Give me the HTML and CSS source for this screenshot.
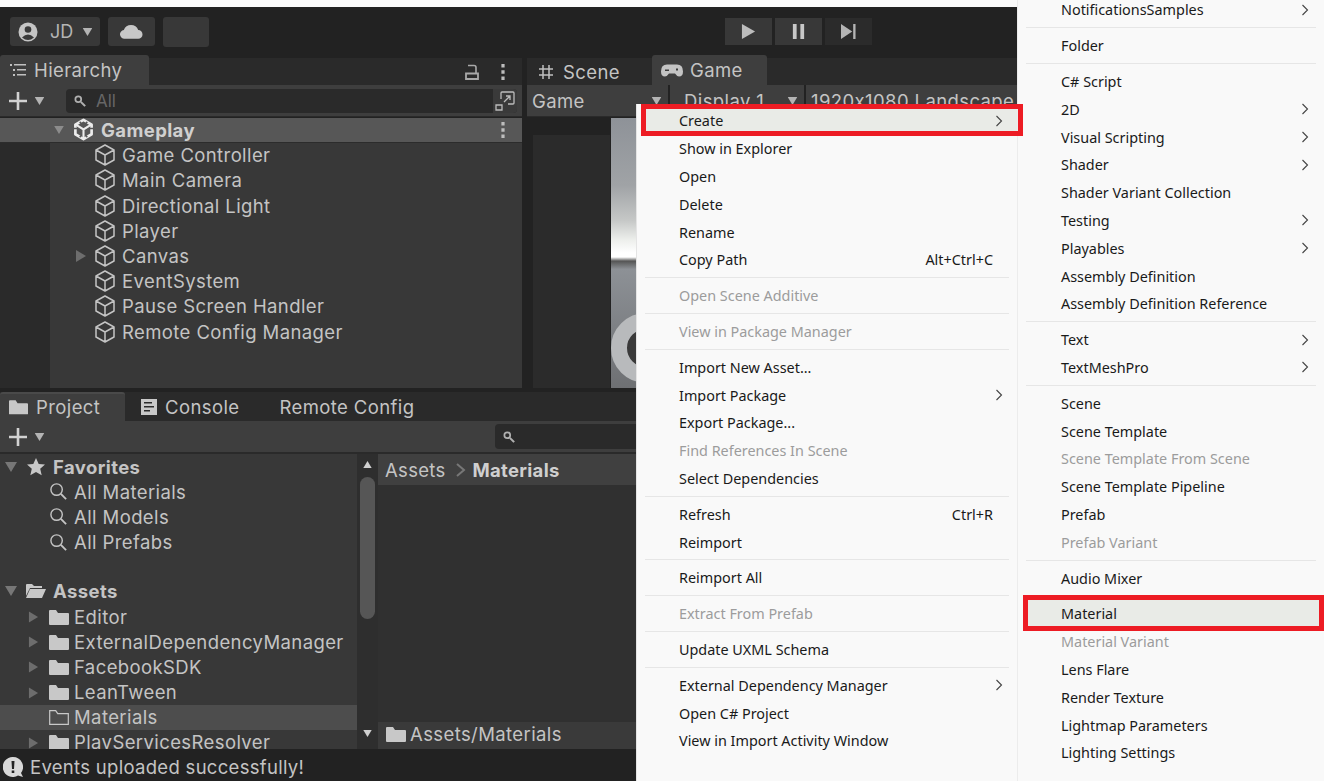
FILE: index.html
```html
<!DOCTYPE html>
<html lang="en">
<head>
  <meta charset="UTF-8">
  <title>Unity Editor - Create Material</title>
  <link rel="stylesheet" href="styles.css">
</head>
<body>
  <svg class="sprite" aria-hidden="true">
    <symbol id="cube" viewBox="0 0 22 24"><path d="M11 2 20 7v10l-9 5-9-5V7zM2 7l9 5 9-5M11 12v10" fill="none" stroke="#c4c4c4" stroke-width="1.5" stroke-linejoin="round"/></symbol>
    <symbol id="folder" viewBox="0 0 20 16"><path d="M0 2q0-1 1-1h6l2 3h10q1 0 1 1v10q0 1-1 1H1q-1 0-1-1z" fill="#c8c8c8"/></symbol>
    <symbol id="lens" viewBox="0 0 20 20"><circle cx="8" cy="8" r="6" fill="none" stroke="#c4c4c4" stroke-width="1.5"/><path d="M12.5 12.5 18 18" stroke="#c4c4c4" stroke-width="2"/></symbol>
    <symbol id="right" viewBox="0 0 12 12"><path d="M1 0 11 6 1 12z" fill="#6d6d6d"/></symbol>
    <symbol id="down" viewBox="0 0 12 10"><path d="M0 0h12L6 10z" fill="#b4b4b4"/></symbol>
    <symbol id="chev" viewBox="0 0 8 12"><path d="M1.5 1 6.5 6l-5 5" fill="none" stroke="#444" stroke-width="1.1"/></symbol>
    <symbol id="plus" viewBox="0 0 20 20"><path d="M10 1v18M1 10h18" stroke="#d2d2d2" stroke-width="2.6"/></symbol>
    <symbol id="dots" viewBox="0 0 4 18"><path d="M0 0h4v4H0zM0 7h4v4H0zM0 14h4v4H0z" fill="#bdbdbd"/></symbol>
    <symbol id="tiny-search" viewBox="0 0 14 14"><circle cx="5" cy="5" r="3.4" fill="none" stroke="#b0b0b0" stroke-width="2"/><path d="M8 8l5 5" stroke="#b0b0b0" stroke-width="2.4"/></symbol>
  </svg>

  <div class="page">
    <div class="editor">
      <header class="toolbar">
        <div class="tool-left">
          <div class="btn btn-account">
            <svg class="ic-20" viewBox="0 0 20 20"><circle cx="10" cy="10" r="9.5" fill="#c4c4c4"/><circle cx="10" cy="7.5" r="3.3" fill="#383838"/><path d="M4 15.5q6-6 12 0-6 5-12 0z" fill="#383838"/></svg>
            <span class="btn-text">JD</span>
            <svg class="ic-down" viewBox="0 0 12 10"><use href="#down"/></svg>
          </div>
          <div class="btn btn-cloud">
            <svg class="ic-cloud" viewBox="0 0 24 15"><path d="M5 15a4.500 4.500 0 0 1-1-9 8 8 0 0 1 15 0 4.500 4.500 0 0 1 0 9z" fill="#c8c8c8"/></svg>
          </div>
          <div class="btn btn-blank"></div>
        </div>
        <div class="tool-play">
          <div class="play-btn"><svg class="ic-play" viewBox="0 0 14 16"><path d="M0 0 14 8 0 16z" fill="#bcbcbc"/></svg></div>
          <div class="play-btn"><svg class="ic-play" viewBox="0 0 14 16"><path d="M1 0h4v16H1zM9 0h4v16H9z" fill="#c8c8c8"/></svg></div>
          <div class="play-btn play-off"><svg class="ic-play" viewBox="0 0 16 16"><path d="M0 0 12 8 0 16zM13 0h2.500v16H13z" fill="#b4b4b4"/></svg></div>
        </div>
      </header>

      <div class="top-row">
        <section class="hierarchy">
          <div class="tabbar">
            <div class="tab tab-active tab-hier">
              <svg class="ic-tab" viewBox="0 0 16 14"><path d="M0 1h2v2H0zM3 6h2v2H3zM3 11h2v2H3zM4 1h12v1.500H4zM7 6h9v1.500H7zM7 11h9v1.500H7z" fill="#c0c0c0"/></svg>
              Hierarchy
            </div>
            <div class="tab-tools">
              <svg class="ic-lock" viewBox="0 0 14 16"><path d="M3 1.500h6q2 0 2 2V9" fill="none" stroke="#a8a8a8" stroke-width="1.600"/><path d="M1 9.500h12v5.500H1z" fill="none" stroke="#a8a8a8" stroke-width="1.800"/></svg>
              <svg class="ic-dots" viewBox="0 0 4 18"><use href="#dots"/></svg>
            </div>
          </div>
          <div class="panel-bar hier-bar">
            <svg class="ic-plus" viewBox="0 0 20 20"><use href="#plus"/></svg>
            <svg class="ic-down-sm" viewBox="0 0 12 10"><use href="#down"/></svg>
            <div class="search search-hier">
              <svg class="ic-search-sm" viewBox="0 0 14 14"><use href="#tiny-search"/></svg>
              <span class="search-hint">All</span>
              <div class="search-end">
                <svg class="ic-popout" viewBox="0 0 20 20"><path d="M6 8V2q0-1 1-1h11q1 0 1 1v10q0 1-1 1h-5M1 14h6v5H1zM9 11l6-6M11 5h4v4" fill="none" stroke="#bcbcbc" stroke-width="1.300"/></svg>
              </div>
            </div>
          </div>
          <div class="scene-row">
            <svg class="ic-arrow-scene" viewBox="0 0 12 10"><path d="M0 0h12L6 10z" fill="#8c8c8c"/></svg>
            <svg class="ic-unity" viewBox="0 0 22 24"><path d="M11 2 19.500 7v10L11 22l-8.500-5V7z" fill="none" stroke="#ececec" stroke-width="2.800" stroke-linejoin="round"/><path d="M3 7l8 5 8-5M11 12v9" fill="none" stroke="#ececec" stroke-width="2.200"/><path d="M0 11h5M17 11h5M7 20l2-2M15 20l-2-2M7 4l2 2M15 4l-2 2" stroke="#575757" stroke-width="1.600"/></svg>
            <span class="scene-name">Gameplay</span>
            <svg class="ic-dots scene-dots" viewBox="0 0 4 18"><use href="#dots"/></svg>
          </div>
          <div class="hier-body">
            <ul class="tree hier-tree">
              <li class="tree-row"><svg class="ic-cube"><use href="#cube"/></svg>Game Controller</li>
              <li class="tree-row"><svg class="ic-cube"><use href="#cube"/></svg>Main Camera</li>
              <li class="tree-row"><svg class="ic-cube"><use href="#cube"/></svg>Directional Light</li>
              <li class="tree-row"><svg class="ic-cube"><use href="#cube"/></svg>Player</li>
              <li class="tree-row has-arrow"><svg class="ic-right"><use href="#right"/></svg><svg class="ic-cube"><use href="#cube"/></svg>Canvas</li>
              <li class="tree-row"><svg class="ic-cube"><use href="#cube"/></svg>EventSystem</li>
              <li class="tree-row"><svg class="ic-cube"><use href="#cube"/></svg>Pause Screen Handler</li>
              <li class="tree-row"><svg class="ic-cube"><use href="#cube"/></svg>Remote Config Manager</li>
            </ul>
          </div>
        </section>

        <section class="game">
          <div class="tabbar">
            <div class="tab tab-scene">
              <svg class="ic-tab" viewBox="0 0 16 16"><path d="M5 1v14M11 1v14M1 5h14M1 11h14" stroke="#c0c0c0" stroke-width="1.500"/></svg>
              Scene
            </div>
            <div class="tab tab-active tab-game">
              <svg class="ic-pad" viewBox="0 0 22 12"><path d="M6 0h10q6 0 6 7 0 5-4 5-2 0-4-3H8q-2 3-4 3-4 0-4-5 0-7 6-7z" fill="#c4c4c4"/><path d="M4 5h4v1.500H4zM15 4h2v2h-2z" fill="#3c3c3c"/></svg>
              Game
            </div>
          </div>
          <div class="game-bar">
            <div class="game-pick pick-game">Game<svg class="ic-down" viewBox="0 0 12 10"><use href="#down"/></svg></div>
            <div class="game-pick pick-display">Display 1<svg class="ic-down" viewBox="0 0 12 10"><use href="#down"/></svg></div>
            <div class="game-pick pick-size">1920x1080 Landscape</div>
          </div>
          <div class="game-view">
            <div class="view-dark"></div>
            <div class="view-shot">
              <div class="ring"></div>
            </div>
          </div>
        </section>
      </div>

      <section class="project">
        <div class="tabbar project-tabs">
          <div class="tab tab-active tab-project">
            <svg class="ic-tab" viewBox="0 0 20 16"><use href="#folder"/></svg>
            Project
          </div>
          <div class="tab tab-console">
            <svg class="ic-tab" viewBox="0 0 16 16"><path d="M0 0h16v16H0z" fill="#c8c8c8"/><path d="M3 3h8v1.500H3zM3 7h10v1.500H3zM3 11h6v1.500H3z" fill="#2a2a2a"/></svg>
            Console
          </div>
          <div class="tab tab-remote">Remote Config</div>
        </div>
        <div class="panel-bar project-bar">
          <svg class="ic-plus" viewBox="0 0 20 20"><use href="#plus"/></svg>
          <svg class="ic-down-sm" viewBox="0 0 12 10"><use href="#down"/></svg>
          <div class="search search-project">
            <svg class="ic-search-sm" viewBox="0 0 14 14"><use href="#tiny-search"/></svg>
          </div>
        </div>
        <div class="project-body">
          <div class="project-tree">
            <div class="tree-head">
              <svg class="ic-down-list" viewBox="0 0 12 10"><path d="M0 0h12L6 10z" fill="#777"/></svg>
              <svg class="ic-head" viewBox="0 0 20 20"><path d="M10 1l2.700 6 6.300.6-4.800 4.200 1.500 6.400L10 15l-5.700 3.200 1.500-6.400L1 7.600 7.300 7z" fill="#c8c8c8"/></svg>
              Favorites
            </div>
            <div class="tree-row sub"><svg class="ic-lens"><use href="#lens"/></svg>All Materials</div>
            <div class="tree-row sub"><svg class="ic-lens"><use href="#lens"/></svg>All Models</div>
            <div class="tree-row sub"><svg class="ic-lens"><use href="#lens"/></svg>All Prefabs</div>
            <div class="tree-gap"></div>
            <div class="tree-head">
              <svg class="ic-down-list" viewBox="0 0 12 10"><path d="M0 0h12L6 10z" fill="#777"/></svg>
              <svg class="ic-head" viewBox="0 0 20 16"><path d="M0 2q0-1 1-1h5l2 2h8v2H4L0 13zM4 6h16l-4 9H0z" fill="#c8c8c8"/></svg>
              Assets
            </div>
            <div class="tree-row sub"><svg class="ic-right-sub"><use href="#right"/></svg><svg class="ic-folder"><use href="#folder"/></svg>Editor</div>
            <div class="tree-row sub"><svg class="ic-right-sub"><use href="#right"/></svg><svg class="ic-folder"><use href="#folder"/></svg>ExternalDependencyManager</div>
            <div class="tree-row sub"><svg class="ic-right-sub"><use href="#right"/></svg><svg class="ic-folder"><use href="#folder"/></svg>FacebookSDK</div>
            <div class="tree-row sub"><svg class="ic-right-sub"><use href="#right"/></svg><svg class="ic-folder"><use href="#folder"/></svg>LeanTween</div>
            <div class="tree-row sub selected"><svg class="ic-folder" viewBox="0 0 20 16"><path d="M.7 15.300V1.700h6l2 3h10.600v10.600z" fill="none" stroke="#c8c8c8" stroke-width="1.200"/></svg>Materials</div>
            <div class="tree-row sub"><svg class="ic-right-sub"><use href="#right"/></svg><svg class="ic-folder"><use href="#folder"/></svg>PlayServicesResolver</div>
          </div>
          <div class="scrollbar">
            <svg class="scroll-up" viewBox="0 0 12 10"><path d="M6 0l6 10H0z" fill="#d0d0d0"/></svg>
            <div class="scroll-thumb"></div>
            <svg class="scroll-down" viewBox="0 0 12 10"><path d="M0 0h12L6 10z" fill="#d0d0d0"/></svg>
          </div>
          <div class="browser">
            <div class="crumbs">
              <span>Assets</span>
              <svg class="ic-crumb" viewBox="0 0 10 14"><path d="M1 1l7 6-7 6" fill="none" stroke="#777" stroke-width="2"/></svg>
              <b>Materials</b>
            </div>
            <div class="browser-files"></div>
            <div class="browser-foot">
              <svg class="ic-folder foot-folder"><use href="#folder"/></svg>
              Assets/Materials
            </div>
          </div>
        </div>
      </section>

      <footer class="status">
        <svg class="ic-status" viewBox="0 0 20 20"><path d="M10 0a10 10 0 0 1 8 16l2 4-5-1.500A10 10 0 1 1 10 0z" fill="#d8d8d8"/><path d="M8.500 4h3l-.5 8H9zM8.700 13.500h2.600V16H8.700z" fill="#222"/></svg>
        Events uploaded successfully!
      </footer>
    </div>

    <nav class="menu menu-main">
      <div class="item hot">Create<svg class="chev"><use href="#chev"/></svg></div>
      <div class="item">Show in Explorer</div>
      <div class="item">Open</div>
      <div class="item">Delete</div>
      <div class="item">Rename</div>
      <div class="item">Copy Path<span class="keys">Alt+Ctrl+C</span></div>
      <div class="sep"></div>
      <div class="item off">Open Scene Additive</div>
      <div class="sep"></div>
      <div class="item off">View in Package Manager</div>
      <div class="sep"></div>
      <div class="item">Import New Asset...</div>
      <div class="item">Import Package<svg class="chev"><use href="#chev"/></svg></div>
      <div class="item">Export Package...</div>
      <div class="item off">Find References In Scene</div>
      <div class="item">Select Dependencies</div>
      <div class="sep"></div>
      <div class="item">Refresh<span class="keys">Ctrl+R</span></div>
      <div class="item">Reimport</div>
      <div class="sep"></div>
      <div class="item">Reimport All</div>
      <div class="sep"></div>
      <div class="item off">Extract From Prefab</div>
      <div class="sep"></div>
      <div class="item">Update UXML Schema</div>
      <div class="sep"></div>
      <div class="item">External Dependency Manager<svg class="chev"><use href="#chev"/></svg></div>
      <div class="item">Open C# Project</div>
      <div class="item">View in Import Activity Window</div>
    </nav>

    <nav class="menu menu-create">
      <div class="item">NotificationsSamples<svg class="chev"><use href="#chev"/></svg></div>
      <div class="sep"></div>
      <div class="item">Folder</div>
      <div class="sep"></div>
      <div class="item">C# Script</div>
      <div class="item">2D<svg class="chev"><use href="#chev"/></svg></div>
      <div class="item">Visual Scripting<svg class="chev"><use href="#chev"/></svg></div>
      <div class="item">Shader<svg class="chev"><use href="#chev"/></svg></div>
      <div class="item">Shader Variant Collection</div>
      <div class="item">Testing<svg class="chev"><use href="#chev"/></svg></div>
      <div class="item">Playables<svg class="chev"><use href="#chev"/></svg></div>
      <div class="item">Assembly Definition</div>
      <div class="item">Assembly Definition Reference</div>
      <div class="sep"></div>
      <div class="item">Text<svg class="chev"><use href="#chev"/></svg></div>
      <div class="item">TextMeshPro<svg class="chev"><use href="#chev"/></svg></div>
      <div class="sep"></div>
      <div class="item">Scene</div>
      <div class="item">Scene Template</div>
      <div class="item off">Scene Template From Scene</div>
      <div class="item">Scene Template Pipeline</div>
      <div class="item">Prefab</div>
      <div class="item off">Prefab Variant</div>
      <div class="sep"></div>
      <div class="item">Audio Mixer</div>
      <div class="sep"></div>
      <div class="item hot">Material</div>
      <div class="item off">Material Variant</div>
      <div class="item">Lens Flare</div>
      <div class="item">Render Texture</div>
      <div class="item">Lightmap Parameters</div>
      <div class="item">Lighting Settings</div>
    </nav>

    <div class="mark mark-create"></div>
    <div class="mark mark-material"></div>
  </div>
</body>
</html>
```

FILE: styles.css
```css
/* page */
body {
  margin: 0;
  background-color: #fbfbfb;
  font-family: Inter, "Liberation Sans", sans-serif;
}

.sprite {
  display: none;
}

.page {
  position: relative;
  width: 1324px;
  height: 781px;
  overflow: hidden;
}

.editor {
  display: flex;
  flex-direction: column;
  width: 1017px;
  height: 774px;
  margin-top: 7px;
  background-color: #222;
  color: #c4c4c4;
  font-size: 18.5px;
}

svg {
  flex: none;
}

/* toolbar */
.toolbar {
  display: flex;
  flex: none;
  height: 48px;
  justify-content: space-between;
}

.tool-left {
  display: flex;
  gap: 8px;
  padding: 10px 0 0 10px;
}

.btn {
  display: flex;
  align-items: center;
  height: 29px;
  background-color: #383838;
  border-radius: 3px;
}

.btn-account {
  width: 90px;
  padding-left: 8px;
  box-sizing: border-box;
}

.btn-text {
  margin-left: 12px;
  margin-right: 9px;
  font-size: 18px;
  color: #b4b4b4;
}

.ic-20 {
  width: 20px;
  height: 20px;
}

.ic-down {
  width: 11px;
  height: 8px;
}

.btn-cloud {
  width: 47px;
  justify-content: center;
}

.ic-cloud {
  width: 23px;
  height: 15px;
}

.btn-blank {
  width: 46px;
  height: 30px;
}

.tool-play {
  display: flex;
  gap: 3px;
  padding: 11px 145px 0 0;
}

.play-btn {
  display: flex;
  width: 47px;
  height: 27px;
  align-items: center;
  justify-content: center;
  background-color: #383838;
}

.play-off {
  background-color: #2b2b2b;
}

.ic-play {
  width: 15px;
  height: 15px;
}

/* panes */
.top-row {
  display: flex;
  flex: none;
  height: 337px;
  gap: 5px;
}

.hierarchy {
  display: flex;
  flex-direction: column;
  width: 522px;
  height: 333px;
}

.game {
  display: flex;
  flex-direction: column;
  flex: 1;
  min-width: 0;
}

.tabbar {
  display: flex;
  flex: none;
  height: 30px;
  align-items: flex-end;
  background-color: #2a2a2a;
  border-top: 3px solid #222;
  box-sizing: border-box;
}

.tab {
  display: flex;
  align-items: center;
  gap: 8px;
  height: 27px;
  box-sizing: border-box;
  letter-spacing: 0.4px;
}

.tab-active {
  height: 30px;
  margin-top: -3px;
  background-color: #3e3e3e;
  border-radius: 3px 3px 0 0;
}

.ic-tab {
  width: 16px;
  height: 16px;
}

.ic-pad {
  width: 22px;
  height: 13px;
  margin-right: -2px;
}

.tab-hier {
  width: 149px;
  padding-left: 10px;
}

.tab-scene {
  width: 125px;
  padding-left: 11px;
}

.tab-scene,
.tab-game {
  gap: 9px;
}

.tab-game {
  width: 115px;
  padding-left: 9px;
}

.tab-tools {
  display: flex;
  flex: 1;
  justify-content: flex-end;
  align-items: center;
  gap: 22px;
  height: 27px;
  padding-right: 17px;
}

.ic-lock {
  width: 14px;
  height: 16px;
}

.ic-dots {
  width: 4px;
  height: 16px;
}

.panel-bar {
  display: flex;
  flex: none;
  align-items: center;
  background-color: #3e3e3e;
  border-bottom: 1px solid #2a2a2a;
  box-sizing: border-box;
}

.hier-bar {
  height: 32px;
  padding-left: 8px;
}

.ic-plus {
  width: 20px;
  height: 20px;
}

.ic-down-sm {
  width: 11px;
  height: 8px;
  margin-left: 6px;
}

.search {
  display: flex;
  align-items: center;
  height: 24px;
  background-color: #2a2a2a;
  border-radius: 4px;
  font-size: 17px;
}

.search-hier {
  width: 451px;
  margin-left: 21px;
  padding-left: 7px;
  box-sizing: border-box;
}

.ic-search-sm {
  width: 14px;
  height: 12px;
}

.search-hint {
  margin-left: 9px;
  color: #666;
}

.search-end {
  display: flex;
  width: 24px;
  height: 24px;
  margin-left: auto;
  align-items: center;
  justify-content: center;
  background-color: #3a3a3a;
  border-radius: 0 4px 4px 0;
}

.ic-popout {
  width: 20px;
  height: 20px;
}

.scene-row {
  display: flex;
  flex: none;
  align-items: center;
  height: 24.6px;
  padding-left: 54px;
  margin-top: 1px;
  background-color: #575757;
  border-bottom: 1px solid #2c2c2c;
  box-sizing: border-box;
  font-weight: 700;
  color: #d0d0d0;
  letter-spacing: 0.4px;
}

.ic-arrow-scene {
  width: 10px;
  height: 8px;
}

.ic-unity {
  width: 21px;
  height: 23px;
  margin-left: 9px;
  margin-right: 7px;
}

.scene-dots {
  margin-left: auto;
  margin-right: 17px;
}

.hier-body {
  flex: 1;
  padding-left: 50px;
  background-color: #2a2a2a;
}

.tree {
  margin: 0;
  padding: 0;
  list-style: none;
}

.hier-tree {
  height: 100%;
  padding-left: 44px;
  background-color: #383838;
  box-sizing: border-box;
}

.tree-row {
  position: relative;
  display: flex;
  align-items: center;
  height: 25.2px;
  letter-spacing: 0.4px;
  white-space: nowrap;
}

.ic-cube {
  width: 22px;
  height: 24px;
  margin-right: 6px;
}

.ic-right {
  position: absolute;
  left: -19px;
  top: 7px;
  width: 12px;
  height: 12px;
}

/* game view */
.game-bar {
  display: flex;
  flex: none;
  height: 32px;
  gap: 2px;
  white-space: nowrap;
  overflow: hidden;
  letter-spacing: 0.4px;
  border-bottom: 1px solid #2a2a2a;
  box-sizing: border-box;
}

.game-pick {
  display: flex;
  flex: none;
  align-items: center;
  justify-content: space-between;
  box-sizing: border-box;
  background-color: #3e3e3e;
}

.pick-game {
  width: 141px;
  padding: 0 6px 0 5px;
}

.pick-display {
  width: 134px;
  padding: 0 6px 0 14px;
}

.pick-size {
  flex: 1;
  padding-left: 5px;
  justify-content: flex-start;
}

.game-view {
  display: flex;
  flex: 1;
  gap: 1px;
  padding: 1px 0 0 6px;
}

.view-dark {
  width: 77px;
  height: 253px;
  margin-top: 17px;
  background-color: #2b2b2b;
}

.view-shot {
  position: relative;
  width: 60px;
  height: 270px;
  overflow: hidden;
  background-image: linear-gradient(#8e9298 0, #a0a3a6 25%, #c6c8c7 38%, #eceeeb 45%, #fff 50%, #fff 51.500%, #555 53%, #8d9196 56%, #6e7073 100%);
}

.ring {
  position: absolute;
  left: 0;
  top: 195px;
  width: 38px;
  height: 38px;
  border: 16px solid #b8babc;
  border-radius: 50%;
  background-color: #3a3a3a;
}

/* project */
.project {
  display: flex;
  flex-direction: column;
  flex: none;
  height: 357px;
  background-color: #2a2a2a;
}

.project-tabs {
  height: 29px;
  border-top: 0;
}

.project-tabs .tab {
  padding-bottom: 2px;
}

.tab-project {
  width: 125px;
  height: 29px;
  margin-top: 0;
  padding-left: 9px;
  border-top: 2px solid #4a4a4a;
}

.tab-project .ic-tab {
  width: 19px;
}

.tab-console {
  margin-left: 16px;
}

.tab-remote {
  margin-left: 40px;
}

.project-bar {
  height: 32px;
  padding-left: 8px;
}

.search-project {
  width: 150px;
  height: 25px;
  margin-left: 450px;
  padding-left: 7px;
  box-sizing: border-box;
}

.project-body {
  display: flex;
  flex: 1;
  min-height: 0;
  margin-top: 1px;
}

.project-tree {
  width: 357px;
  overflow: hidden;
  background-color: #383838;
}

.tree-head {
  display: flex;
  align-items: center;
  height: 25.2px;
  margin-top: 0;
  padding-left: 5px;
  font-weight: 700;
  letter-spacing: 0.4px;
}

.ic-down-list {
  width: 12px;
  height: 10px;
}

.ic-head {
  width: 20px;
  height: 20px;
  margin-left: 9px;
  margin-right: 7px;
}

.sub {
  padding-left: 49px;
}

.ic-lens {
  width: 19px;
  height: 19px;
  margin-right: 6px;
}

.tree-gap {
  height: 24px;
}

.ic-right-sub {
  position: absolute;
  left: 28px;
  top: 7px;
  width: 11px;
  height: 12px;
}

.ic-folder {
  width: 20px;
  height: 16px;
  margin-right: 5px;
}

.selected {
  background-color: #4d4d4d;
}

.scrollbar {
  display: flex;
  flex-direction: column;
  align-items: center;
  width: 21px;
  padding-top: 7px;
  box-sizing: border-box;
  background-color: #2e2e2e;
}

.scroll-up,
.scroll-down {
  width: 11px;
  height: 7px;
}

.scroll-thumb {
  width: 15px;
  height: 142px;
  margin-top: 9px;
  background-color: #565656;
  border-radius: 8px;
}

.scroll-down {
  margin-top: auto;
  margin-bottom: 12px;
}

.browser {
  display: flex;
  flex-direction: column;
  flex: 1;
}

.crumbs {
  display: flex;
  align-items: center;
  height: 31px;
  padding-left: 7px;
  background-color: #404040;
  letter-spacing: 0.3px;
}

.ic-crumb {
  width: 10px;
  height: 14px;
  margin: 0 7px 0 10px;
}

.crumbs b {
  color: #cfcfcf;
}

.browser-files {
  flex: 1;
  background-color: #303030;
}

.browser-foot {
  display: flex;
  align-items: center;
  height: 27px;
  padding: 0 0 4px 8px;
  box-sizing: border-box;
  background-color: #3a3a3a;
  letter-spacing: 0.4px;
}

.foot-folder {
  margin-right: 4px;
}

/* status bar */
.status {
  display: flex;
  flex: 1;
  align-items: center;
  gap: 7px;
  padding: 4px 0 0 3px;
  background-color: #222;
  letter-spacing: 0.3px;
}

.ic-status {
  width: 20px;
  height: 20px;
}

/* context menus, these sit on top of the editor */
.menu {
  position: absolute;
  display: flex;
  flex-direction: column;
  background-color: #f9f9f9;
  font-family: "Noto Sans", "Open Sans", sans-serif;
  font-size: 14.4px;
  color: #1a1a1a;
}

.menu-main {
  left: 636px;
  top: 104px;
  width: 381px;
  height: 677px;
  padding-top: 3px;
  box-sizing: border-box;
  border-left: 1px solid #e4e4e4;
}

.menu-create {
  left: 1017px;
  top: -4px;
  width: 307px;
  height: 785px;
  border-left: 1px solid #ececec;
  box-sizing: border-box;
}

.item {
  display: flex;
  flex: none;
  align-items: center;
  height: 27.8px;
  padding-left: 42px;
  padding-right: 14px;
  white-space: nowrap;
}

.menu-create .item {
  padding-left: 43px;
  padding-right: 15px;
}

.off {
  color: #9c9c9c;
}

.menu .hot {
  margin-left: 5px;
  padding-left: 37px;
  background-color: #e9ebe7;
}

.menu-create .hot {
  padding-left: 38px;
}

.keys {
  margin-left: auto;
  margin-right: 10px;
}

.chev {
  width: 8px;
  height: 12px;
  margin-left: auto;
}

.sep {
  flex: none;
  height: 1px;
  margin: 3.5px 8px;
  background-color: #e6e6e6;
}

.mark {
  position: absolute;
  border: 5px solid #ed1c24;
  box-sizing: border-box;
}

.mark-create {
  left: 641px;
  top: 104px;
  width: 382px;
  height: 32px;
}

.mark-material {
  left: 1023px;
  top: 595px;
  width: 301px;
  height: 36px;
}
```
